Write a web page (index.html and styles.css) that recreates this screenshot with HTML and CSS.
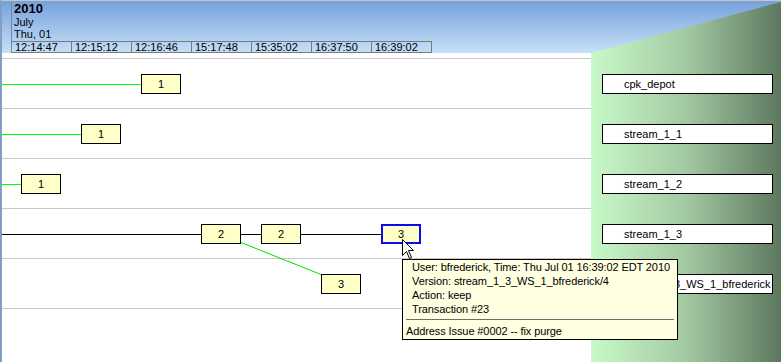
FILE: index.html
```html
<!DOCTYPE html>
<html lang="en">
<head>
  <meta charset="UTF-8">
  <title>Version Browser</title>
  <link rel="stylesheet" href="styles.css">
</head>
<body>
  <div class="window">

    <div class="header">
      <div class="gutter"></div>
      <div class="dates">
        <div class="year">2010</div>
        <div class="month">July</div>
        <div class="day">Thu, 01</div>
        <div class="ruler">
          <div class="tick">12:14:47</div>
          <div class="tick">12:15:12</div>
          <div class="tick">12:16:46</div>
          <div class="tick">15:17:48</div>
          <div class="tick">15:35:02</div>
          <div class="tick">16:37:50</div>
          <div class="tick">16:39:02</div>
        </div>
      </div>
    </div>

    <div class="graph">
      <!-- edges between versions -->
      <svg class="edges" width="589" height="304" viewBox="0 0 589 304">
        <g stroke="#00ff00" stroke-width="1" shape-rendering="crispEdges">
          <line x1="0" y1="26.5" x2="139" y2="26.5"/>
          <line x1="0" y1="76.5" x2="79" y2="76.5"/>
          <line x1="0" y1="126.5" x2="19" y2="126.5"/>
        </g>
        <line x1="239" y1="184.5" x2="319" y2="216.5" stroke="#00e000" stroke-width="1"/>
        <g stroke="#000" stroke-width="1" shape-rendering="crispEdges">
          <line x1="0" y1="176.5" x2="199" y2="176.5"/>
          <line x1="239" y1="176.5" x2="259" y2="176.5"/>
          <line x1="299" y1="176.5" x2="379" y2="176.5"/>
        </g>
      </svg>

      <div class="lane">
        <div class="node t2">1</div>
      </div>
      <div class="lane">
        <div class="node t1">1</div>
      </div>
      <div class="lane">
        <div class="node t0">1</div>
      </div>
      <div class="lane">
        <div class="node t3">2</div>
        <div class="node t4">2</div>
        <div class="node t6 selected">3</div>
      </div>
      <div class="lane">
        <div class="node t5">3</div>
      </div>
      <div class="lane"></div>
    </div>

    <div class="streams">
      <div class="stream">cpk_depot</div>
      <div class="stream">stream_1_1</div>
      <div class="stream">stream_1_2</div>
      <div class="stream">stream_1_3</div>
      <div class="stream long">stream_1_3_WS_1_bfrederick</div>
    </div>

    <div class="tooltip">
      <div class="tip-info">
        <div>User: bfrederick, Time: Thu Jul 01 16:39:02 EDT 2010</div>
        <div>Version: stream_1_3_WS_1_bfrederick/4</div>
        <div>Action: keep</div>
        <div>Transaction #23</div>
      </div>
      <div class="tip-rule"></div>
      <div class="tip-comment">Address Issue #0002 -- fix purge</div>
    </div>

    <svg class="cursor" width="13" height="21" viewBox="0 0 13 21">
      <path d="M0.5 0.5 L0.5 16.5 L4.5 12.5 L7.5 19.5 L9.5 18.5 L6.5 11.5 L11.5 11.5 Z" fill="#fff" stroke="#000" stroke-width="1"/>
    </svg>

  </div>
</body>
</html>
```

FILE: styles.css
```css
html, body {
  margin: 0;
  padding: 0;
  background: #fff;
}

body {
  font-family: 'Liberation Sans', Arial, sans-serif;
  font-size: 11px;
  color: #000;
}

.window {
  position: relative;
  width: 781px;
  height: 362px;
  box-sizing: border-box;
  border-top: 1px solid #c9c6bd;
  border-left: 2px solid #809fc2;
  overflow: hidden;
  background: #fff;
}

/* date header */
.header {
  display: flex;
  height: 52px;
  background: linear-gradient(to bottom, #76a0dc, #c6e0f8);
}

.gutter {
  width: 9px;
}

.dates {
  border-left: 1px solid #6f86a9;
}

.year {
  font-size: 13px;
  font-weight: bold;
  line-height: 15px;
  padding-left: 2px;
}

.month, .day {
  line-height: 12px;
  padding-left: 2px;
}

.day {
  line-height: 13px;
}

.ruler {
  display: flex;
  border-top: 1px solid #7a7a7a;
  border-bottom: 1px solid #7a7a7a;
  height: 12px;
  box-sizing: border-box;
}

.tick {
  width: 60px;
  box-sizing: border-box;
  border-right: 1px solid #7a7a7a;
  padding-left: 3px;
  line-height: 10px;
}

/* version graph */
.graph {
  position: relative;
  margin-top: 5px;
}

.edges {
  position: absolute;
  top: 0;
  left: 0;
  z-index: 1;
}

.lane {
  position: relative;
  height: 50px;
  box-sizing: border-box;
  border-top: 1px solid #c8c8c8;
}

.node {
  position: absolute;
  top: 15px;
  width: 40px;
  height: 20px;
  box-sizing: border-box;
  border: 1px solid #000;
  background: #ffffc8;
  text-align: center;
  line-height: 18px;
  z-index: 2;
}

.node.selected {
  border: 2px solid #0b0bf0;
  line-height: 16px;
}

.t0 { left: 19px; }
.t1 { left: 79px; }
.t2 { left: 139px; }
.t3 { left: 199px; }
.t4 { left: 259px; }
.t5 { left: 319px; }
.t6 { left: 379px; }

/* stream names panel */
.streams {
  position: absolute;
  top: 0;
  left: 589px;
  width: 190px;
  height: 361px;
  box-sizing: border-box;
  padding: 73px 0 0 11px;
  display: flex;
  flex-direction: column;
  gap: 30px;
  background: linear-gradient(to right, #c8f9c8, #a3c9a3 50%, #5d775e);
  clip-path: polygon(0 52px, 100% 1px, 100% 100%, 0 100%);
  z-index: 3;
}

.stream {
  width: 171px;
  height: 20px;
  box-sizing: border-box;
  border: 1px solid #000;
  background: #fff;
  padding-left: 21px;
  line-height: 18px;
  white-space: nowrap;
  overflow: hidden;
}

.stream.long {
  padding-left: 19px;
}

/* hover tooltip */
.tooltip {
  position: absolute;
  left: 400px;
  top: 258px;
  width: 276px;
  height: 81px;
  box-sizing: border-box;
  border: 1px solid #000;
  background: #ffffe1;
  z-index: 4;
}

.tip-info {
  padding-left: 9px;
  line-height: 14px;
  white-space: nowrap;
  letter-spacing: -0.1px;
}

.tip-rule {
  margin: 3px 3px 4px;
  border-top: 1px solid #6e6e6e;
}

.tip-comment {
  padding-left: 3px;
  line-height: 14px;
  letter-spacing: -0.1px;
}

.cursor {
  position: absolute;
  left: 400px;
  top: 238px;
  z-index: 5;
}
```
